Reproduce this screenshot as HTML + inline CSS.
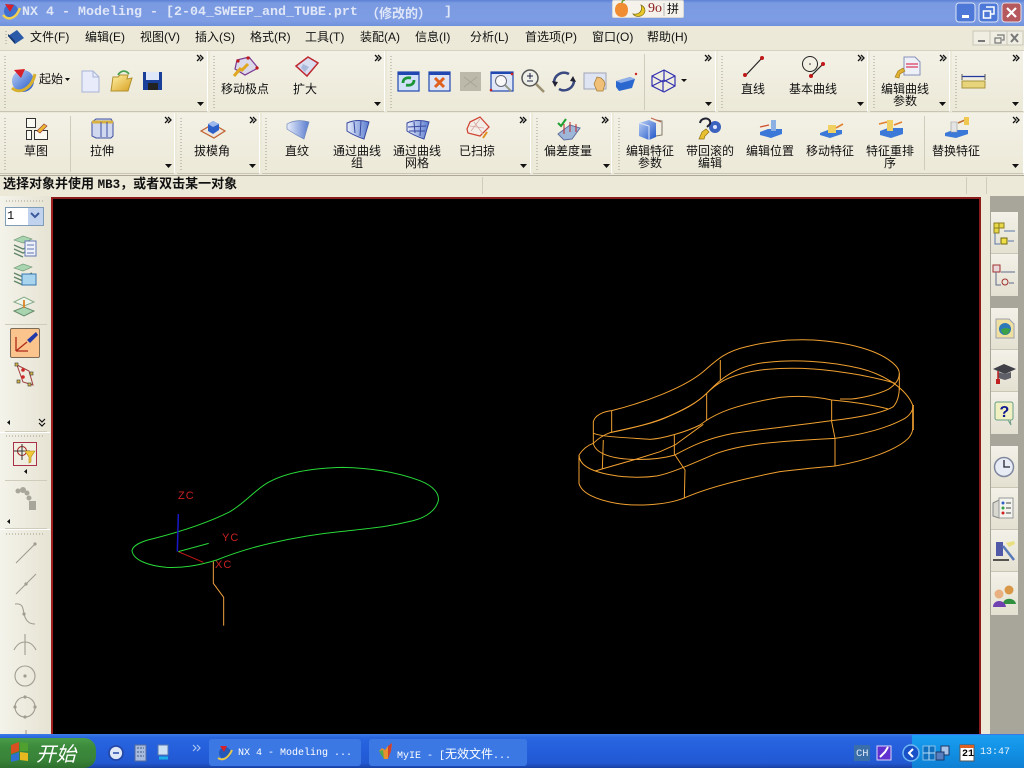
<!DOCTYPE html>
<html lang="zh">
<head>
<meta charset="utf-8">
<title>NX 4 - Modeling</title>
<style>
html,body{margin:0;padding:0;width:1024px;height:768px;overflow:hidden;background:#ece9d8}
body{position:relative;font-family:"Liberation Sans","WenQuanYi Zen Hei","Noto Sans CJK SC",sans-serif;font-size:12px;color:#111}
div{position:absolute;box-sizing:border-box}
.t{white-space:nowrap;line-height:12px;font-size:12px}
.c{white-space:nowrap;line-height:12px;font-size:12px;transform:translateX(-50%);text-align:center}
.bar{background:linear-gradient(#f3f1e6,#ece9d8);border-bottom:1px solid #c8c5b4;border-right:1px solid #fff}
svg{position:absolute;left:0;top:0}
</style>
</head>
<body>
<div style="left:0;top:0;width:1024px;height:26px;background:linear-gradient(#5c80d4 0,#7a9ae2 12%,#7d9ce3 80%,#6f90dc 100%)"></div>
<div style="left:22px;top:5px;font:bold 13.33px/16px 'Liberation Mono',monospace;color:#dfe6f8;white-space:pre">NX 4 - Modeling - [2-04_SWEEP_and_TUBE.prt</div>
<div style="left:366px;top:5px;font:bold 13px/16px 'WenQuanYi Zen Hei','Noto Sans CJK SC',sans-serif;color:#dfe6f8;white-space:pre">（修改的）</div>
<div style="left:444px;top:5px;font:bold 13.33px/16px 'Liberation Mono',monospace;color:#dfe6f8">]</div>
<div style="left:612px;top:0;width:72px;height:18px;background:#f4f2ea;border-radius:2px;border:1px solid #d8d8d8"></div>
<div class="t" style="left:648px;top:3px;font-family:'Liberation Serif',serif;font-size:14px;color:#8a1a1a">9o</div>
<div class="t" style="left:667px;top:3px">拼</div>

<div style="left:0;top:26px;width:1024px;height:25px;background:#ece9d8;border-bottom:1px solid #d5d2c2"></div>
<div class="t" style="left:30px;top:31px">文件(F)</div>
<div class="t" style="left:85px;top:31px">编辑(E)</div>
<div class="t" style="left:140px;top:31px">视图(V)</div>
<div class="t" style="left:195px;top:31px">插入(S)</div>
<div class="t" style="left:250px;top:31px">格式(R)</div>
<div class="t" style="left:305px;top:31px">工具(T)</div>
<div class="t" style="left:360px;top:31px">装配(A)</div>
<div class="t" style="left:415px;top:31px">信息(I)</div>
<div class="t" style="left:470px;top:31px">分析(L)</div>
<div class="t" style="left:525px;top:31px">首选项(P)</div>
<div class="t" style="left:592px;top:31px">窗口(O)</div>
<div class="t" style="left:647px;top:31px">帮助(H)</div>

<div class="bar" style="left:0;top:51px;width:208px;height:61px"></div>
<div class="bar" style="left:210px;top:51px;width:175px;height:61px"></div>
<div class="bar" style="left:387px;top:51px;width:329px;height:61px"></div>
<div class="bar" style="left:718px;top:51px;width:150px;height:61px"></div>
<div class="bar" style="left:870px;top:51px;width:80px;height:61px"></div>
<div class="bar" style="left:952px;top:51px;width:72px;height:61px"></div>

<div class="bar" style="left:0;top:113px;width:175px;height:61px"></div>
<div class="bar" style="left:177px;top:113px;width:83px;height:61px"></div>
<div class="bar" style="left:262px;top:113px;width:269px;height:61px"></div>
<div class="bar" style="left:533px;top:113px;width:79px;height:61px"></div>
<div class="bar" style="left:614px;top:113px;width:410px;height:61px"></div>

<div class="t" style="left:39px;top:73px">起始</div>
<div class="c" style="left:245px;top:83px">移动极点</div>
<div class="c" style="left:305px;top:83px">扩大</div>
<div class="c" style="left:753px;top:83px">直线</div>
<div class="c" style="left:813px;top:83px">基本曲线</div>
<div class="c" style="left:905px;top:83px">编辑曲线<br>参数</div>

<div class="c" style="left:36px;top:145px">草图</div>
<div class="c" style="left:102px;top:145px">拉伸</div>
<div class="c" style="left:212px;top:145px">拔模角</div>
<div class="c" style="left:297px;top:145px">直纹</div>
<div class="c" style="left:357px;top:145px">通过曲线<br>组</div>
<div class="c" style="left:417px;top:145px">通过曲线<br>网格</div>
<div class="c" style="left:477px;top:145px">已扫掠</div>
<div class="c" style="left:568px;top:145px">偏差度量</div>
<div class="c" style="left:650px;top:145px">编辑特征<br>参数</div>
<div class="c" style="left:710px;top:145px">带回滚的<br>编辑</div>
<div class="c" style="left:770px;top:145px">编辑位置</div>
<div class="c" style="left:830px;top:145px">移动特征</div>
<div class="c" style="left:890px;top:145px">特征重排<br>序</div>
<div class="c" style="left:956px;top:145px">替换特征</div>

<div style="left:0;top:175px;width:1024px;height:21px;background:#ece9d8;border-top:1px solid #aca899"></div>
<div class="t" style="left:3px;top:177px;font-weight:bold;font-size:13px;line-height:14px;white-space:pre">选择对象并使用 <span style="font-family:'Liberation Mono',monospace;font-size:12.5px">MB3</span>，或者双击某一对象</div>

<div style="left:51px;top:197px;width:930px;height:538px;background:#000;border:2px solid #8c1c1c;border-left-color:#a01f1f;border-bottom:0"></div>
<div style="left:990px;top:196px;width:34px;height:539px;background:#a8a69a"></div>
<div style="left:991px;top:212px;width:27px;height:42px;background:linear-gradient(#f3f1e8,#e4e1d2);border-bottom:1px solid #c9c6b6"></div>
<div style="left:991px;top:254px;width:27px;height:42px;background:linear-gradient(#f3f1e8,#e4e1d2)"></div>
<div style="left:991px;top:308px;width:27px;height:42px;background:linear-gradient(#f3f1e8,#e4e1d2);border-bottom:1px solid #c9c6b6"></div>
<div style="left:991px;top:350px;width:27px;height:42px;background:linear-gradient(#f3f1e8,#e4e1d2);border-bottom:1px solid #c9c6b6"></div>
<div style="left:991px;top:392px;width:27px;height:42px;background:linear-gradient(#f3f1e8,#e4e1d2)"></div>
<div style="left:991px;top:446px;width:27px;height:42px;background:linear-gradient(#f3f1e8,#e4e1d2);border-bottom:1px solid #c9c6b6"></div>
<div style="left:991px;top:488px;width:27px;height:42px;background:linear-gradient(#f3f1e8,#e4e1d2);border-bottom:1px solid #c9c6b6"></div>
<div style="left:991px;top:530px;width:27px;height:42px;background:linear-gradient(#f3f1e8,#e4e1d2);border-bottom:1px solid #c9c6b6"></div>
<div style="left:991px;top:572px;width:27px;height:43px;background:linear-gradient(#f3f1e8,#e4e1d2)"></div>

<div style="left:0;top:196px;width:51px;height:539px;background:linear-gradient(90deg,#f4f3ea,#e6e3d3)"></div>
<div style="left:5px;top:207px;width:39px;height:19px;background:#fff;border:1px solid #7f9db9"></div>
<div class="t" style="left:7px;top:210px;font-family:'Liberation Mono',monospace">1</div>
<div style="left:28px;top:208px;width:15px;height:17px;background:#c1d2ee"></div>
<div style="left:10px;top:328px;width:30px;height:30px;background:#fbc48d;border:1px solid #7d6a55;border-radius:2px"></div>
<div style="left:13px;top:442px;width:24px;height:24px;background:#f1ede0;border:1px solid #a8324a"></div>

<div style="left:0;top:734px;width:1024px;height:34px;background:linear-gradient(#3a7be8 0,#2a66e0 10%,#245edb 50%,#2259d2 85%,#1941a5 100%)"></div>
<div style="left:0;top:738px;width:96px;height:30px;background:linear-gradient(#4a9c4a,#3c8a3c 30%,#388238 75%,#2d6e2d);border-radius:0 12px 12px 0"></div>
<div style="left:36px;top:741px;font:italic 20px/24px 'WenQuanYi Zen Hei','Noto Sans CJK SC',sans-serif;color:#fff">开始</div>
<div style="left:209px;top:739px;width:152px;height:27px;background:#3c78e4;border-radius:3px"></div>
<div style="left:369px;top:739px;width:158px;height:27px;background:#3c78e4;border-radius:3px"></div>
<div class="t" style="left:238px;top:748px;font-family:'Liberation Mono',monospace;font-size:10px;color:#fff;white-space:pre">NX 4 - Modeling ...</div>
<div class="t" style="left:397px;top:748px;font-family:'Liberation Mono',monospace;font-size:10px;color:#fff;white-space:pre">MyIE - [<span style="font:12px/12px 'WenQuanYi Zen Hei','Noto Sans CJK SC',sans-serif">无效文件</span>...</div>
<div style="left:912px;top:735px;width:112px;height:33px;background:linear-gradient(#1c9ff0,#1190e4 50%,#0f80d4)"></div>
<div style="left:854px;top:745px;width:16px;height:16px;background:#3a6ea8"></div>
<div class="t" style="left:856px;top:748px;font-family:'Liberation Mono',monospace;font-size:10.5px;color:#dfe8f6">CH</div>
<div class="t" style="left:980px;top:747px;font-family:'Liberation Mono',monospace;font-size:10px;color:#e8f0fa">13:47</div>
<div class="t" style="left:962px;top:749px;font-family:'Liberation Mono',monospace;font-size:10px;font-weight:bold;color:#000;z-index:3">21</div>

<svg width="1024" height="768" viewBox="0 0 1024 768" fill="none">
<defs>
<linearGradient id="b" x1="0" y1="0" x2="1" y2="1"><stop offset="0" stop-color="#bcd0f4"/><stop offset="1" stop-color="#1f55c8"/></linearGradient>
<linearGradient id="y" x1="0" y1="0" x2="1" y2="1"><stop offset="0" stop-color="#fff2a8"/><stop offset="1" stop-color="#d8a020"/></linearGradient>
<linearGradient id="s" x1="0" y1="0" x2="1" y2="0"><stop offset="0" stop-color="#e8eefb"/><stop offset="1" stop-color="#5a7ccf"/></linearGradient>
</defs>

<!-- window buttons -->
<g>
<rect x="956" y="3" width="19" height="19" rx="3" fill="#4d78d8" stroke="#dbe4f8"/>
<rect x="962" y="15" width="7" height="3" fill="#fff"/>
<rect x="979" y="3" width="19" height="19" rx="3" fill="#4d78d8" stroke="#dbe4f8"/>
<path d="M986 7h8v7h-3M983.500 11h7v7h-7z" stroke="#fff" stroke-width="1.500"/>
<rect x="1002" y="3" width="19" height="19" rx="3" fill="#b5595e" stroke="#e6dbe0"/>
<path d="M1007 8l9 9M1016 8l-9 9" stroke="#fff" stroke-width="2.200"/>
</g>
<!-- title logo -->
<circle cx="11" cy="11" r="7" fill="#3f70d0"/>
<path d="M3 15C8 21 16 19 20 8" stroke="#f0d050" stroke-width="2.500"/>
<path d="M5 4l9 1-4 7z" fill="#d8202a"/>
<!-- language bar -->
<path d="M622 3c-5-1-7 3-7 7s3 7 7 7 6-3 6-7-2-7-6-7z" fill="#f08c32"/>
<path d="M622 3c0-2 1-3 3-3" stroke="#6a9c30" stroke-width="1.500"/>
<path d="M641 5c2 6-2 10-8 9 3 4 11 3 12-3 0-3-2-5-4-6z" fill="#e8c828" stroke="#806a10" stroke-width=".7"/>
<path d="M664 3v13" stroke="#b5b5b5"/>
<!-- MDI buttons -->
<g stroke="#c9c6b6" fill="#f0eee2">
<rect x="973" y="31" width="17" height="14"/><rect x="990" y="31" width="17" height="14"/><rect x="1007" y="31" width="16" height="14"/>
</g>
<path d="M978 41h7" stroke="#777" stroke-width="2"/>
<path d="M997 35h7v5h-2M995 38h6v5h-6z" stroke="#777" stroke-width="1.200"/>
<path d="M1011 34l7 8M1018 34l-7 8" stroke="#777" stroke-width="2"/>
<!-- menu icon -->
<path d="M8 36l9-6 7 8-9 6z" fill="#2a5aa8"/><path d="M8 36l7 8v-3l-7-7z" fill="#15356f"/>
<!-- grippers -->
<g stroke="#a09d8d" stroke-width="1" stroke-dasharray="1 2">
<path d="M5 56v52M214 56v52M391 56v52M722 56v52M874 56v52M956 56v52"/>
<path d="M5 118v52M181 118v52M266 118v52M537 118v52M619 118v52"/>
<path d="M6 201h38M6 436h38M6 534h38"/>
<path d="M6 36v0M6 31v13"/>
</g>
<!-- separators -->
<g stroke="#cfccbc">
<path d="M644.500 54v56M70.500 116v56M924.500 116v54"/>
<path d="M5 324.500h42M5 431.500h42M5 480.500h42M5 528.500h42"/>
<path d="M482.500 177v17M966.500 177v17M986.500 177v17" />
</g>
<path d="M0 432.500h50M0 529.500h50" stroke="#fff"/>
<!-- chevrons -->
<g stroke="#111" stroke-width="1.300">
<path d="M197 55l3 3-3 3M200 55l3 3-3 3M375 55l3 3-3 3M378 55l3 3-3 3M705 55l3 3-3 3M708 55l3 3-3 3M858 55l3 3-3 3M861 55l3 3-3 3M940 55l3 3-3 3M943 55l3 3-3 3M1013 55l3 3-3 3M1016 55l3 3-3 3"/>
<path d="M165 117l3 3-3 3M168 117l3 3-3 3M250 117l3 3-3 3M253 117l3 3-3 3M520 117l3 3-3 3M523 117l3 3-3 3M602 117l3 3-3 3M605 117l3 3-3 3M1013 117l3 3-3 3M1016 117l3 3-3 3"/>
</g>
<g fill="#111">
<path d="M197 102h7l-3.500 4zM374 102h7l-3.500 4zM705 102h7l-3.500 4zM857 102h7l-3.500 4zM939 102h7l-3.500 4zM1012 102h7l-3.500 4zM165 164h7l-3.500 4zM249 164h7l-3.500 4zM520 164h7l-3.500 4zM603 164h7l-3.500 4zM1012 164h7l-3.500 4zM65 78h5l-2.500 3zM681 79h6l-3 3z"/>
<path d="M10 420v5l-3-2.500zM27 520v0M10 519v5l-3-2.500zM27 469v5l-3-2.500z"/>
</g>
<path d="M39 419l3 3 3-3M39 423l3 3 3-3" stroke="#111" stroke-width="1.200"/>
<path d="M31 213l4 4 4-4" stroke="#3c5a9c" stroke-width="2"/>

<!-- row 1 icons -->
<circle cx="23" cy="81" r="11" fill="url(#b)"/><path d="M12 88C20 95 32 88 35 74" stroke="#d8b030" stroke-width="3"/><path d="M14 70l11-1-4 9z" fill="#d8202a"/>
<path d="M82 71h11l6 6v15H82z" fill="#e8ecfa" stroke="#a8b4d8"/><path d="M93 71v6h6" stroke="#a8b4d8"/>
<path d="M111 91l2-14h5l2-2h8l-1 4 5-1-4 13z" fill="url(#y)" stroke="#b09030"/><path d="M118 75c3-5 8-5 11-1" stroke="#48a050" stroke-width="1.800"/>
<rect x="143" y="72" width="19" height="18" fill="#1a3f98"/><rect x="146" y="72" width="13" height="8" fill="#dfe8f8"/><rect x="148" y="83" width="10" height="7" fill="#222"/>
<path d="M237 60l12-3 9 11-13 7-10-6z" fill="#dbd8ea" stroke="#7a3a90" stroke-width="1.200"/>
<path d="M234 76l6-7 2 1 6-6" stroke="#e0a820" stroke-width="3"/><circle cx="238" cy="61" r="1.600" fill="#c01818"/><circle cx="248" cy="58" r="1.600" fill="#c01818"/><circle cx="257" cy="68" r="1.600" fill="#c01818"/>
<path d="M296 66l12-9 10 6-11 13z" fill="#d8def0" stroke="#c02830" stroke-width="1.500"/><path d="M303 64l6 3-4 5-4-4z" fill="#aab8da"/>
<!-- view icons -->
<rect x="398" y="72" width="21" height="19" fill="#cfe0f8" stroke="#2048b0" stroke-width="1.200"/><rect x="398" y="72" width="21" height="3" fill="#2048b0"/>
<path d="M403 83c0-4 3-6 8-5M414 80c0 4-3 6-8 5" stroke="#1c9438" stroke-width="2.800"/>
<rect x="429" y="72" width="21" height="19" fill="#dfe4f4" stroke="#2048b0" stroke-width="1.200"/><rect x="429" y="72" width="21" height="3" fill="#2048b0"/>
<path d="M435 78l9 9M444 78l-9 9" stroke="#e06020" stroke-width="3"/>
<rect x="460" y="72" width="21" height="19" fill="#bcb9aa"/><path d="M464 77l13 10M477 77l-13 10" stroke="#a8a594"/>
<rect x="491" y="72" width="22" height="19" fill="#dfe6f6" stroke="#2048b0" stroke-width="1.200"/><rect x="491" y="72" width="22" height="2" fill="#2048b0"/><circle cx="501" cy="81" r="5.500" fill="#f8f8f8" stroke="#667"/><path d="M505 85l6 6" stroke="#998" stroke-width="2"/><circle cx="512" cy="74" r="1.300" fill="#d02020"/><circle cx="491" cy="90" r="1.300" fill="#d02020"/>
<circle cx="530" cy="78" r="8" fill="#eef0e8" stroke="#555" stroke-width="1.500"/><path d="M527 76h6M530 73v6M527 81h6" stroke="#224" /><path d="M536 84l8 8" stroke="#9a9070" stroke-width="2.600"/>
<path d="M554 83a10 10 0 0 1 15-9M574 80a10 10 0 0 1-15 9" stroke="#3a4a80" stroke-width="2.600"/><path d="M552 81l3 6 3-5zM576 82l-3-6-3 5z" fill="#223"/>
<rect x="584" y="73" width="22" height="16" fill="#dfe4f2" stroke="#a0a4b8"/>
<path d="M594 84l3-7 4 1 3 3 1 3-2 7h-6z" fill="#f0c078" stroke="#a07830" stroke-width=".7"/>
<path d="M616 81l14-4 5 2-3 9-13 3-3-4z" fill="#2a68d0"/><path d="M616 81l14-4 5 2-14 4z" fill="#90b0e8"/><circle cx="636" cy="74" r="1.200" fill="#d02020"/>
<path d="M652 76l12-6 11 6v10l-11 6-12-6zM652 76l11 6 12-6M663 82v10M664 70v10M652 86l12-6 11 6" stroke="#3030b0" stroke-width="1.200"/>
<!-- line icons -->
<path d="M746 75l16-17" stroke="#222" stroke-width="1.200"/><circle cx="745" cy="75" r="2" fill="#c01818"/><circle cx="762" cy="58" r="2" fill="#c01818"/>
<circle cx="810" cy="64" r="7.500" stroke="#222"/><circle cx="810" cy="64" r=".8" fill="#222"/><path d="M811 76l12-12" stroke="#222" stroke-width="1.200"/><circle cx="811" cy="76" r="2" fill="#c01818"/><circle cx="823" cy="64" r="2" fill="#c01818"/>
<path d="M904 57h11l5 5v13h-16z" fill="#eef0f8" stroke="#8890b8"/><path d="M906 64h12M906 67h12" stroke="#e05878" stroke-width="1.500"/><path d="M895 77l3-6 5-3 2 3-5 3-1 4z" fill="#e0b030" stroke="#a07818" stroke-width=".6"/>
<rect x="962" y="81" width="23" height="7" fill="#e8d47a" stroke="#a89440"/><path d="M962 76.500h23" stroke="#2038a0" stroke-width="1.200"/><path d="M962 74v6M985 74v6" stroke="#555"/>

<!-- row 2 icons -->
<rect x="26.500" y="118.500" width="9" height="9" fill="#fafaf2" stroke="#333"/><rect x="26.500" y="130.500" width="5" height="9" fill="#fafaf2" stroke="#333"/><rect x="34.500" y="130.500" width="13" height="9" fill="#fafaf2" stroke="#333"/><path d="M37 131l7-7 3 2-7 7z" fill="#e8b830" stroke="#a04040" stroke-width=".7"/>
<path d="M92 122l4-3h15l2 3v14l-2 2H96l-4-2z" fill="#d0d8f0" stroke="#4050a0"/><path d="M92 122h21" stroke="#d8b040" stroke-width="3"/><path d="M101 122v15M107 122v15" stroke="#4050a0"/>
<path d="M201 131l12-7 12 7-11 7z" stroke="#c06030" stroke-width="1.200" fill="#eee6dc"/><path d="M208 124l5-3 6 3v6l-6 4-5-3z" fill="#2c60c8"/><path d="M208 124l5-3 6 3-6 3z" fill="#9cb8ec"/>
<path d="M287 124c7-4 15-4 22-2l-5 17c-6-3-11-6-17-10z" fill="url(#s)" stroke="#7088b8" stroke-width=".7"/>
<path d="M347 123c7-3 15-3 22-1l-5 17c-6-2-11-4-17-8z" fill="url(#s)" stroke="#3848a0"/><path d="M354 122l1 11M361 121l-1 15" stroke="#3848a0"/>
<path d="M407 123c7-3 15-3 22-1l-5 17c-6-2-11-4-17-8z" fill="url(#s)" stroke="#3848a0"/><path d="M414 122l1 11M421 121l-1 15M408 127l18-1M409 131l16 0" stroke="#3848a0"/>
<path d="M470 122l10-5 9 10-9 9-12-3-1-4z" fill="#f4eee8" stroke="#d04838" stroke-width="1.300"/><path d="M474 122l9 12M480 119l-9 12M470 126l14 2" stroke="#d8a8a0" stroke-width=".8"/><path d="M487 132l-4 6" stroke="#e0901c" stroke-width="2"/>
<path d="M558 134l12-9 10 3-8 11-8 1z" fill="#9eb6d8" stroke="#6070a0"/><path d="M564 124v10M570 122v10M576 124v8" stroke="#c02828"/><path d="M558 123l3 3 5-7" stroke="#20a030" stroke-width="2"/>
<path d="M639 123l10-3 7 3v14l-7 3-10-4z" fill="url(#b)"/><path d="M639 123l10 3v14" stroke="#dfe8f8"/><path d="M656 120l6 1v14l-6 1" stroke="#807868"/><path d="M651 118l10 4" stroke="#c06048"/>
<path d="M699 139l3-7 4-3 3 3-4 4-1 3z" fill="#e8c030" stroke="#907010" stroke-width=".7"/><circle cx="715" cy="127" r="6" fill="#3c62c0"/><circle cx="715" cy="127" r="2" fill="#dfe6f8"/><path d="M700 123c1-5 8-6 10-2 1 3-1 4-3 6" stroke="#223" stroke-width="2"/>
<path d="M760 132l8-3 14 0v5l-11 4-11-3z" fill="#3c78d8"/><path d="M771 120h5v11h-5z" fill="#8cb0e4"/><path d="M760 127l9-2" stroke="#d05030" stroke-width="1.400"/>
<path d="M820 133l8-3 14 0v4l-12 4-10-3z" fill="#3c78d8"/><path d="M828 125h8v8h-8z" fill="#f0d060"/><path d="M836 128l7-4" stroke="#e08030" stroke-width="1.600"/>
<path d="M880 131l8-3 15 0v6l-12 4-11-3z" fill="#3c78d8"/><path d="M887 120h6v11h-6z" fill="#f0d060"/><path d="M879 124l8-2M894 125l8-3" stroke="#e08030" stroke-width="1.600"/>
<path d="M945 133l8-3 15 0v4l-12 4-11-2z" fill="#3c78d8"/><path d="M951 122h6v10h-6z" fill="#e4e4e4" stroke="#999" stroke-width=".6"/><path d="M958 123l7-3" stroke="#c07030" stroke-width="1.600"/><rect x="964" y="117" width="5" height="8" fill="#f0c850"/>

<!-- left bar icons -->
<g id="lay">
<path d="M14 240l9-4 9 3-9 4z" fill="#a8d4b0" stroke="#68906c" stroke-width=".6"/><path d="M14 245l9 4 9-4M14 249l9 4 9-4M14 253l9 4" stroke="#5e8466" stroke-width="1.300"/><rect x="25" y="241" width="11" height="15" fill="#eef0fa" stroke="#6078b0"/><path d="M27 245h7M27 249h7M27 253h7" stroke="#6078b0"/>
<path d="M14 268l9-4 9 3-9 4z" fill="#a8d4b0" stroke="#68906c" stroke-width=".6"/><path d="M14 273l9 4 9-4M14 277l9 4 9-4M14 281l9 4" stroke="#5e8466" stroke-width="1.300"/><rect x="22" y="274" width="14" height="11" fill="#a8d4ee" stroke="#3878b0"/>
<path d="M14 302l10-5 10 5-10 4z" fill="#eef6ec" stroke="#88a888"/><path d="M14 311l10-4 10 4-10 5z" fill="#a8d4b0" stroke="#688c6c"/><path d="M24 300v8" stroke="#e08020" stroke-width="1.800"/>
</g>
<path d="M16 351v-14M16 351l12 0M16 351l11-9" stroke="#b02818" stroke-width="1.300"/><path d="M27 340l9-8 2 3-8 8z" fill="#2038a8"/>
<path d="M17 365l12 6 4 14-10-3z" stroke="#a04040" fill="none"/><g fill="#d02828"><circle cx="23" cy="370" r="1.800"/><circle cx="23" cy="377" r="1.800"/></g><g fill="#d8b848" stroke="#333" stroke-width=".6"><rect x="15" y="363" width="3" height="3"/><rect x="30" y="372" width="3" height="3"/><rect x="28" y="383" width="3" height="3"/><rect x="17" y="380" width="3" height="3"/></g>
<circle cx="22" cy="451" r="4.500" stroke="#a01818"/><path d="M14 451h16M22 444v16" stroke="#333"/><path d="M25 451h10l-4 6v5l-2 1v-6z" fill="#f0c838" stroke="#b08818" stroke-width=".6"/>
<g fill="#a8a59a"><circle cx="18" cy="491" r="2.500"/><circle cx="23" cy="490" r="3"/><circle cx="27" cy="493" r="2.500"/><circle cx="29" cy="498" r="2.500"/><rect x="29" y="501" width="7" height="9"/></g>
<g stroke="#a09c90" stroke-width="1.100">
<path d="M16 563l19-19"/><path d="M16 594l20-20"/><path d="M15 604c8-1 8 4 9 10 2 8 6 10 11 10"/><path d="M14 650c3-6 7-8 11-8s8 2 11 8M25 634v21"/>
<circle cx="25" cy="676" r="10"/><circle cx="25" cy="707" r="10"/><path d="M26 730v4"/>
</g>
<g fill="#a09c90"><circle cx="35" cy="544" r="1.600"/><circle cx="26" cy="584" r="1.600"/><circle cx="24" cy="614" r="1.600"/><circle cx="25" cy="676" r="1.600"/><circle cx="25" cy="697" r="1.600"/><circle cx="15" cy="707" r="1.600"/><circle cx="35" cy="707" r="1.600"/><circle cx="25" cy="717" r="1.600"/></g>

<!-- right bar icons -->
<rect x="994" y="223" width="5" height="5" fill="#e8d848" stroke="#8a7c20"/><rect x="999" y="223" width="5" height="5" fill="#e8d848" stroke="#8a7c20"/><rect x="994" y="228" width="5" height="5" fill="#e8d848" stroke="#8a7c20"/>
<path d="M995 233v11h5M1004 231h11M1008 241h6" stroke="#5a78a8"/><rect x="1001" y="238" width="6" height="6" fill="#f0e048" stroke="#706810"/>
<rect x="993" y="265" width="7" height="7" fill="#e8d8d8" stroke="#a03030"/><path d="M996 272v13h5M1001 272h14M1009 283h5" stroke="#606a88"/><circle cx="1005" cy="282" r="3" stroke="#a03030"/>
<path d="M996 319h13l5 5v14h-18z" fill="#f0e0a0" stroke="#9ca0b0"/><circle cx="1005" cy="329" r="6" fill="#2c78b8"/><path d="M1001 330c3-3 7-2 9-1 0 3-3 6-5 6-2-1-3-2-4-5z" fill="#3ca048"/>
<path d="M993 369l11-5 12 5-11 5z" fill="#404048"/><path d="M998 372v6l7 2 6-2v-6l-6 2z" fill="#606068"/><path d="M998 371v9" stroke="#c02020" stroke-width="1.500"/><rect x="996" y="379" width="4" height="5" fill="#c02020"/>
<rect x="995" y="402" width="18" height="18" rx="2" fill="#f0f0c0" stroke="#6a9c88"/><path d="M1008 420l3 5-1-5" fill="#f0f0c0" stroke="#6a9c88"/><text x="999.500" y="417" style="font:bold 16px 'Liberation Sans',sans-serif" fill="#101890">?</text>
<circle cx="1004" cy="467" r="9.500" fill="#e8ecf4" stroke="#8088a0" stroke-width="1.500"/><path d="M1004 460v7h6" stroke="#223" stroke-width="1.300"/>
<path d="M993 503l6-3v18l-6-2z" fill="#d8d8d0" stroke="#888"/><rect x="999" y="498" width="14" height="20" fill="#f4f4ee" stroke="#999"/><circle cx="1003" cy="503" r="1.500" fill="#3060c8"/><circle cx="1003" cy="508" r="1.500" fill="#30a040"/><circle cx="1003" cy="513" r="1.500" fill="#d02020"/><path d="M1006 503h5M1006 508h5M1006 513h5" stroke="#444"/>
<path d="M996 542h7v14h-7z" fill="#5058a8"/><path d="M993 560h16" stroke="#222" stroke-width="1.500"/><path d="M1003 546l11 14" stroke="#5878b8" stroke-width="2.500"/><path d="M1006 543l8-2 1 3-6 3z" fill="#e8e080"/>
<circle cx="1009" cy="590" r="4.500" fill="#d89848"/><path d="M1003 604c0-7 12-7 13 0z" fill="#309040"/><circle cx="999" cy="594" r="4.500" fill="#e8b080"/><path d="M993 607c0-8 12-8 13 0z" fill="#7040b0"/>

<!-- viewport geometry -->
<g transform="translate(120 460) scale(.33333)">
<path vector-effect="non-scaling-stroke" stroke="#28d838" stroke-width="1" d="M36 272C38 258 60 245 100 236C170 218 260 190 330 155C375 128 400 95 440 70C490 40 570 24 670 22C760 24 840 40 900 62C940 78 958 100 955 122C948 150 920 172 880 182C800 202 740 206 660 215C590 222 520 234 450 250C390 264 340 280 290 300C230 318 190 324 140 322C90 318 40 302 36 272Z"/>
<path vector-effect="non-scaling-stroke" stroke="#1818c8" stroke-width="1.500" d="M175 162L172 275"/>
<path vector-effect="non-scaling-stroke" stroke="#c81818" stroke-width="1" d="M175 275L250 307"/>
<path vector-effect="non-scaling-stroke" stroke="#28d838" stroke-width="1" d="M175 275L266 250"/>
<path vector-effect="non-scaling-stroke" stroke="#f0a040" stroke-width="1" d="M280 305V370L311 412V497"/>
</g>
<g style="font:11px 'Liberation Sans',sans-serif;letter-spacing:1px" fill="#c82020">
<text x="178" y="499">ZC</text><text x="222" y="541">YC</text><text x="215" y="568">XC</text>
</g>
<g transform="translate(560 330) scale(.33333)" stroke="#f0a030" stroke-width="1">
<g fill="none">
<path vector-effect="non-scaling-stroke" d="M100 340V275C105 255 130 245 155 242C250 218 370 175 430 125C470 90 495 65 560 50C640 30 700 28 760 30C860 36 960 60 1005 105Q1018 118 1018 130C1018 150 1005 165 985 178C950 195 900 205 875 207H840"/>
<path vector-effect="non-scaling-stroke" d="M150 308C200 298 260 285 310 265C370 242 410 220 440 190C480 150 520 108 620 97C700 88 800 92 900 115C980 135 1040 180 1058 225V295"/>
<path vector-effect="non-scaling-stroke" d="M100 340C115 325 130 315 150 308C200 295 270 285 320 262C380 235 415 215 440 190C470 160 510 130 620 118C720 110 800 118 900 135C950 145 985 152 1005 160"/>
<path vector-effect="non-scaling-stroke" d="M100 340C105 365 140 385 215 388C270 390 310 385 345 375C390 350 440 325 520 310C620 296 720 285 815 272C900 262 970 248 1000 230Q1018 210 1018 170"/>
<path vector-effect="non-scaling-stroke" d="M100 310C125 320 180 322 270 328C310 326 380 305 420 285C470 245 540 222 660 202C720 196 770 200 815 210C880 216 940 225 985 237"/>
<path vector-effect="non-scaling-stroke" d="M57 375C58 405 90 420 130 430C180 442 240 445 290 438C340 428 410 395 470 370C540 345 620 335 825 325C920 312 990 290 1035 265Q1058 250 1060 225"/>
<path vector-effect="non-scaling-stroke" d="M57 375V460C65 490 110 510 170 520C220 528 310 528 370 505C430 478 530 450 660 425C730 416 780 412 825 408C920 392 1010 360 1045 325Q1058 310 1058 295"/>
<path vector-effect="non-scaling-stroke" d="M57 375C70 355 85 345 100 340"/>
<path vector-effect="non-scaling-stroke" d="M105 423L230 387L300 365L345 345L430 283"/>
<path vector-effect="non-scaling-stroke" d="M155 242V308M481 90V152M440 190V272M343 315V372L375 420L373 505M815 210V275L825 325V408M130 330L127 416M1018 130V180M1060 225V300"/>
</g>
</g>

<!-- taskbar icons -->
<path d="M11 745l8-3v9l-8 3z" fill="#d85020"/><path d="M20 742l8 1v8l-8 0z" fill="#50a030"/><path d="M11 755l8-3v8l-8 2z" fill="#3070d0"/><path d="M20 752l8 1v8l-8-1z" fill="#e8b820"/>
<circle cx="116" cy="753" r="7" fill="#dfe8f6" stroke="#2448a8" stroke-width="1.800"/><path d="M113 753h6" stroke="#2448a8" stroke-width="1.500"/>
<rect x="135" y="745" width="11" height="16" fill="#a8bce0" stroke="#556c9c"/><path d="M137 748h7M137 752h7M137 756h7" stroke="#44587c" stroke-dasharray="2 1"/>
<rect x="158" y="745" width="10" height="10" fill="#cde0f4" stroke="#5878b0"/><path d="M159 758h9" stroke="#1cb0e8" stroke-width="3"/>
<path d="M193 745l3 3-3 3M197 745l3 3-3 3" stroke="#a8c4f0" stroke-width="1.200"/>
<circle cx="225" cy="753" r="6" fill="#2458b8"/><path d="M218 758c4 3 10 1 14-8" stroke="#e8c94a" stroke-width="2"/><path d="M220 746l7 0-3 6z" fill="#d8202a"/>
<path d="M379 751l5 8 4 0 3-8 1-7-4 2-3 4-3-2z" fill="#e89030"/><path d="M379 751l5 8-1-9z" fill="#50a848"/><path d="M388 746l4-3-1 8-3 8z" fill="#d04030"/>
<rect x="877" y="746" width="14" height="14" fill="#6030d0" stroke="#dcd4f8"/><path d="M880 757l5-5 3-5" stroke="#fff" stroke-width="2"/>
<circle cx="911" cy="753" r="8" fill="#1850c8" stroke="#70b8f0" stroke-width="1.500"/><path d="M913 749l-4 4 4 4" stroke="#fff" stroke-width="2"/>
<rect x="923" y="746" width="12" height="14" fill="#1070c0" stroke="#88c0e8"/><path d="M923 753h12M929 746v14" stroke="#b8e0f8"/>
<rect x="941" y="746" width="8" height="9" fill="#a8c4e8" stroke="#1c3868"/><rect x="936" y="752" width="8" height="8" fill="#5880c0" stroke="#1c3868"/>
<rect x="960" y="745" width="14" height="16" fill="#fff" stroke="#555"/><rect x="960" y="745" width="14" height="3" fill="#e06020"/>
</svg>
</body>
</html>
